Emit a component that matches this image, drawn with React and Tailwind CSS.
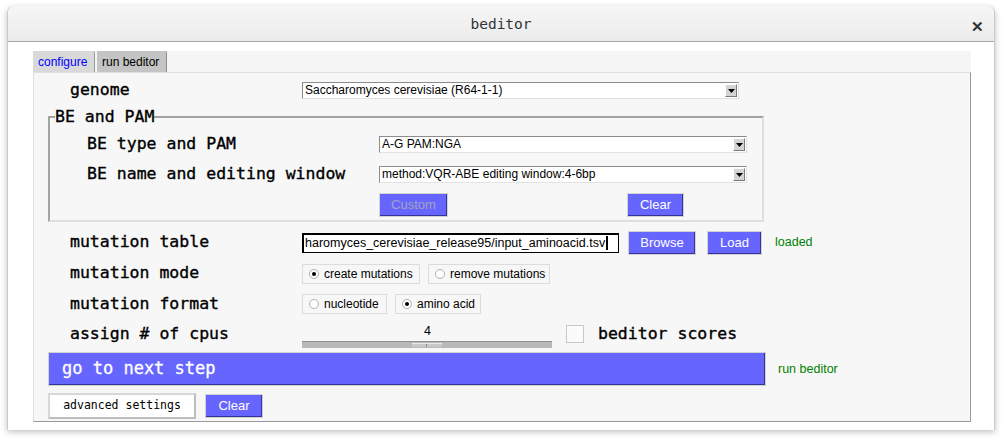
import React from 'react';

const mono = { fontFamily: '"DejaVu Sans Mono", "Liberation Mono", monospace' };
const sans = { fontFamily: '"Liberation Sans", Arial, sans-serif' };

const Select = ({ width, value }) => (
  <div
    style={sans}
    className={`flex h-[17px] items-center justify-between bg-white border-t border-l border-[#8c8c8c] border-r border-b border-r-[#e2e2e2] border-b-[#e2e2e2] pl-[2px] text-[12px] text-black ${width}`}
  >
    <span className="leading-none whitespace-nowrap">{value}</span>
    <div className="mr-[1px] flex h-[13px] w-[12px] items-center justify-center bg-[#d4d4d4] border-t border-l border-white border-r border-b border-r-[#7a7a7a] border-b-[#7a7a7a]">
      <svg width="7" height="5" viewBox="0 0 7 5" className="mt-[2px]">
        <polygon points="0,0 7,0 3.5,4" fill="#000" />
      </svg>
    </div>
  </div>
);

const BlueButton = ({ width, children, disabled }) => (
  <div className={`flex h-[24px] items-center justify-center border border-[#d2d2d2] bg-[#d2d2d2] ${width}`}>
    <div
      style={sans}
      className={`flex h-full w-full items-center justify-center bg-[#6666ff] shadow-[inset_-1px_-1px_0_#33339a] text-[13px] ${disabled ? 'text-[#a3a3b8]' : 'text-white'}`}
    >
      {children}
    </div>
  </div>
);

const Radio = ({ width, checked, label }) => (
  <div
    style={sans}
    className={`flex h-[20px] items-center gap-[5px] whitespace-nowrap border border-[#dcdcdc] pl-[6px] text-[12px] text-black ${width}`}
  >
    <div className="flex h-[10px] w-[10px] shrink-0 items-center justify-center rounded-full border border-[#b0b0b0] bg-white">
      {checked && <div className="h-[4px] w-[4px] rounded-full bg-black" />}
    </div>
    <span className="leading-none">{label}</span>
  </div>
);

const Label = ({ children, width = 'w-[232px]' }) => (
  <div style={mono} className={`shrink-0 text-[16.5px] text-black leading-none [-webkit-text-stroke:0.35px_black] ${width}`}>
    {children}
  </div>
);

const App = () => {
  return (
    <div className="h-[440px] w-[1007px] overflow-hidden bg-white">
      <div className="ml-[7px] mt-[6px] h-[424px] w-[988px] rounded-t-[7px] border-x border-[#c9c9c9] bg-white shadow-[0_2px_6px_rgba(0,0,0,0.25)]">
        {/* title bar */}
        <div className="relative flex h-[36px] items-center justify-center rounded-t-[7px] border-b border-[#a6a6a6] bg-gradient-to-b from-[#f6f6f6] to-[#ebebeb] pt-[3px]">
          <span style={mono} className="text-[14.5px] text-[#2e3436]">beditor</span>
          <span className="absolute right-[10px] top-[10px] text-[15px] font-bold text-[#2e3436]" style={sans}>✕</span>
        </div>

        {/* notebook */}
        <div className="ml-[25px] mt-[9px] w-[938px]">
          <div className="flex h-[21px] items-end bg-[#f5f5f5]">
            <div style={sans} className="flex h-[21px] w-[62px] items-center rounded-tr-[2px] border-r border-[#9a9a9a] bg-[#d9d9d9] pl-[5px] text-[12px] text-[#0000ff]">
              configure
            </div>
            <div style={sans} className="ml-[2px] flex h-[21px] w-[70px] items-center rounded-tr-[2px] border-r border-[#8a8a8a] bg-[#c4c4c4] pl-[5px] text-[12px] text-black">
              run beditor
            </div>
          </div>

          <div className="h-[350px] border-t border-l border-[#dedede] border-r border-b border-r-[#9a9a9a] border-b-[#9a9a9a] bg-[#f7f7f7] pt-[2px]">
            {/* genome */}
            <div className="flex h-[30px] items-center pl-[36px]">
              <Label>genome</Label>
              <Select width="w-[437px]" value="Saccharomyces cerevisiae (R64-1-1)" />
            </div>

            {/* BE and PAM */}
            <fieldset className="ml-[14px] mt-[3px] w-[716px] border-2 border-t-[#a3a3a3] border-l-[#a3a3a3] border-r-[#dedede] border-b-[#dedede] pl-[5px]">
              <legend style={mono} className="text-[16.5px] leading-[18px] text-black [-webkit-text-stroke:0.35px_black]">BE and PAM</legend>
              <div className="pl-[32px] pt-[3px]">
                <div className="flex h-[30px] items-center">
                  <Label width="w-[292px]">BE type and PAM</Label>
                  <Select width="w-[368px]" value="A-G PAM:NGA" />
                </div>
                <div className="flex h-[30px] items-center">
                  <Label width="w-[292px]">BE name and editing window</Label>
                  <Select width="w-[368px]" value="method:VQR-ABE editing window:4-6bp" />
                </div>
                <div className="mb-[3px] mt-[4px] flex items-center pl-[292px]">
                  <BlueButton width="w-[69px]" disabled>Custom</BlueButton>
                  <div className="ml-[179px]">
                    <BlueButton width="w-[57px]">Clear</BlueButton>
                  </div>
                </div>
              </div>
            </fieldset>

            {/* mutation table */}
            <div className="mt-[5px] flex h-[31px] items-center pl-[36px]">
              <Label>mutation table</Label>
              <div style={sans} className="flex h-[20px] w-[317px] items-center overflow-hidden border border-black border-t-2 border-l-2 bg-white pl-[1px] text-[12.5px] text-black">
                <span className="whitespace-nowrap leading-none">haromyces_cerevisiae_release95/input_aminoacid.tsv</span>
                <span className="ml-[1px] h-[14px] w-[2px] shrink-0 bg-black" />
              </div>
              <div className="ml-[9px]">
                <BlueButton width="w-[68px]">Browse</BlueButton>
              </div>
              <div className="ml-[11px]">
                <BlueButton width="w-[55px]">Load</BlueButton>
              </div>
              <span style={sans} className="ml-[13px] text-[12.5px] text-[#008000]">loaded</span>
            </div>

            {/* mutation mode */}
            <div className="flex h-[31px] items-center pl-[36px]">
              <Label>mutation mode</Label>
              <Radio width="w-[118px]" checked label="create mutations" />
              <div className="ml-[8px]">
                <Radio width="w-[122px]" label="remove mutations" />
              </div>
            </div>

            {/* mutation format */}
            <div className="flex h-[30px] items-center pl-[36px]">
              <Label>mutation format</Label>
              <Radio width="w-[85px]" label="nucleotide" />
              <div className="ml-[8px]">
                <Radio width="w-[86px]" checked label="amino acid" />
              </div>
            </div>

            {/* cpus */}
            <div className="flex h-[30px] items-center pl-[36px]">
              <Label>assign # of cpus</Label>
              <div className="flex w-[250px] flex-col pt-[5px]">
                <span style={sans} className="ml-[122px] text-[12.5px] leading-none text-black">4</span>
                <div className="mt-[4px] flex h-[7px] w-[250px] items-start border-t border-[#8f8f8f] bg-[#b8b8b8] pl-[110px]">
                  <div className="mt-[1px] flex h-[4px] w-[30px] border-t border-[#e8e8e8] bg-[#c8c8c8]">
                    <div className="ml-[14px] h-full w-px bg-[#8a8a8a]" />
                  </div>
                </div>
              </div>
              <div className="ml-[14px] h-[18px] w-[18px] border border-[#c8c8c8] bg-[#fbfbfb]" />
              <span style={mono} className="ml-[14px] text-[16.5px] leading-none text-black [-webkit-text-stroke:0.35px_black]">beditor scores</span>
            </div>

            {/* go to next step */}
            <div className="ml-[14px] mt-[3px] flex items-center">
              <div className="h-[34px] w-[718px] border border-[#d2d2d2] bg-[#d2d2d2]">
                <div style={mono} className="flex h-full w-full items-center bg-[#6666ff] pl-[13px] text-[17px] text-white shadow-[inset_-1px_-1px_0_#33339a] [-webkit-text-stroke:0.3px_white]">
                  go to next step
                </div>
              </div>
              <span style={sans} className="ml-[12px] text-[12.5px] text-[#008000]">run beditor</span>
            </div>

            {/* bottom buttons */}
            <div className="ml-[14px] mt-[7px] flex items-center">
              <div style={mono} className="flex h-[26px] w-[148px] items-center justify-center border-2 border-t-[#d8d8d8] border-l-[#d8d8d8] border-r-[#bdbdbd] border-b-[#bdbdbd] bg-white text-[11.5px] text-black">
                advanced settings
              </div>
              <div className="ml-[9px]">
                <BlueButton width="w-[58px]">Clear</BlueButton>
              </div>
            </div>
          </div>
        </div>
      </div>
    </div>
  );
};

export default App;
